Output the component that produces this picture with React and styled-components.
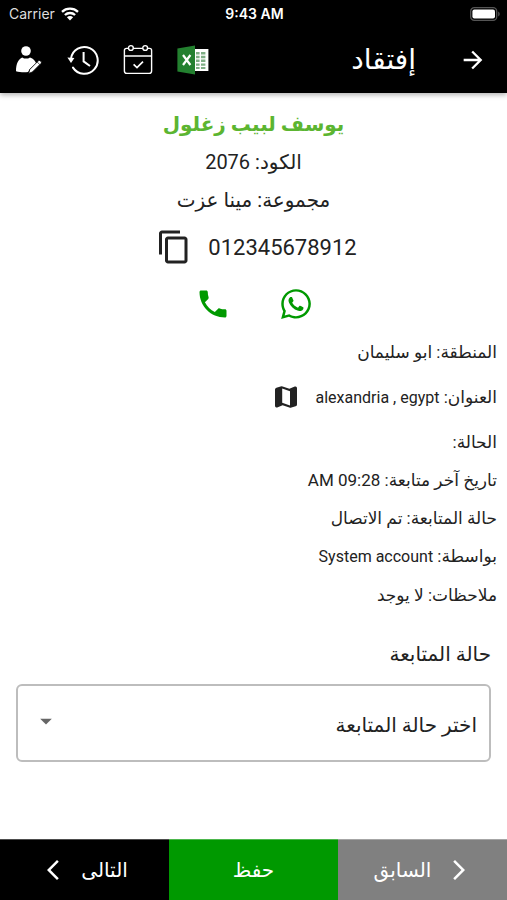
import React, { useState } from 'react';
import styled, { createGlobalStyle } from 'styled-components';
import {
    MdArrowForward,
    MdArrowBackIosNew,
    MdArrowForwardIos,
    MdContentCopy,
    MdPhone,
    MdArrowDropDown,
} from 'react-icons/md';
import { FaWhatsapp } from 'react-icons/fa';

const details = [
    { label: 'الحالة', value: '' },
    { label: 'تاريخ آخر متابعة', value: '09:28 AM' },
    { label: 'حالة المتابعة', value: 'تم الاتصال' },
    { label: 'بواسطة', value: 'System account', latin: true },
    { label: 'ملاحظات', value: 'لا يوجد' },
];

export default function App() {
    const [status, setStatus] = useState('');

    return (
        <Page dir="rtl" lang="ar">
            <GlobalStyle />

            <Header>
                <StatusBar dir="ltr">
                    <Carrier>Carrier <WifiIcon /></Carrier>
                    <Time>9:43 AM</Time>
                    <BatteryArea><BatteryIcon /></BatteryArea>
                </StatusBar>

                <NavBar>
                    <IconButton aria-label="رجوع"><MdArrowForward size={28} /></IconButton>
                    <Title>إفتقاد</Title>
                    <Tools dir="ltr">
                        <IconButton aria-label="تعديل"><UserEditIcon /></IconButton>
                        <IconButton aria-label="السجل"><HistoryIcon /></IconButton>
                        <IconButton aria-label="الحضور"><CalendarIcon /></IconButton>
                        <IconButton aria-label="Excel"><ExcelIcon /></IconButton>
                    </Tools>
                </NavBar>
            </Header>

            <Content>
                <Person>
                    <Name>يوسف لبيب زغلول</Name>
                    <Line>الكود: 2076</Line>
                    <Line>مجموعة: مينا عزت</Line>
                    <PhoneRow>
                        <Phone>012345678912</Phone>
                        <IconButton aria-label="نسخ"><MdContentCopy size={36} /></IconButton>
                    </PhoneRow>
                    <Contact>
                        <ContactLink href="#whatsapp" aria-label="واتساب"><FaWhatsapp size={34} /></ContactLink>
                        <ContactLink href="#call" aria-label="اتصال"><MdPhone size={36} /></ContactLink>
                    </Contact>
                </Person>

                <Details>
                    <Detail>المنطقة: ابو سليمان</Detail>
                    <AddressRow>
                        <span>العنوان: <Latin>alexandria , egypt</Latin></span>
                        <IconButton aria-label="الخريطة"><MapIcon /></IconButton>
                    </AddressRow>
                    {details.map((item) => (
                        <Detail key={item.label}>
                            {item.label}: {item.latin ? <Latin>{item.value}</Latin> : item.value}
                        </Detail>
                    ))}
                </Details>

                <Field>
                    <Label htmlFor="status">حالة المتابعة</Label>
                    <SelectBox>
                        <Select id="status" value={status} onChange={(e) => setStatus(e.target.value)}>
                            <option value="">اختر حالة المتابعة</option>
                            <option value="called">تم الاتصال</option>
                        </Select>
                        <Caret><MdArrowDropDown size={28} /></Caret>
                    </SelectBox>
                </Field>
            </Content>

            <Footer>
                <FooterButton $color="#808080"><MdArrowForwardIos size={24} />السابق</FooterButton>
                <FooterButton $color="#009900">حفظ</FooterButton>
                <FooterButton $color="#000">التالى<MdArrowBackIosNew size={24} /></FooterButton>
            </Footer>
        </Page>
    );
}

function WifiIcon() {
    return (
        <svg width="18" height="14" viewBox="0 0 18 14" fill="none" stroke="#fff" strokeWidth="2.3">
            <path d="M1 4.8 C5.5 0.6 12.5 0.6 17 4.8" />
            <path d="M3.9 8 C6.8 5.3 11.2 5.3 14.1 8" />
            <path d="M9 13.4 L5.9 10.3 C7.7 8.7 10.3 8.7 12.1 10.3 Z" fill="#fff" stroke="none" />
        </svg>
    );
}

function BatteryIcon() {
    return (
        <svg width="30" height="14" viewBox="0 0 30 14">
            <rect x="0.7" y="0.7" width="26" height="12.6" rx="3.6" fill="none" stroke="#555" strokeWidth="1.3" />
            <rect x="2.4" y="2.4" width="22.6" height="9.2" rx="2" fill="#fff" />
            <path d="M28.2 4.6 C30.2 5.4 30.2 8.6 28.2 9.4 Z" fill="#555" />
        </svg>
    );
}

function UserEditIcon() {
    return (
        <svg width="28" height="30" viewBox="0 0 28 30" fill="#fff">
            <circle cx="11" cy="6" r="4.8" />
            <path d="M1 26.2 C1 18.4 3.6 13.8 7.2 12.4 C9.6 14 12.6 14 15 12.4 C18.4 13.6 20.4 16 21.2 18.4 L14.4 24.6 L13.2 27 C9 27.6 4.6 27.2 1 26.2 Z" />
            <path d="M14.8 24.4 L23.4 15.8 Q24.4 15 25.4 16 L26 16.6 Q26.8 17.6 26 18.4 L17.4 27 L13.6 28.4 Z" stroke="#000" strokeWidth="0.8" />
            <path d="M22 16.8 L25 19.8" stroke="#000" strokeWidth="0.7" />
        </svg>
    );
}

function HistoryIcon() {
    return (
        <svg width="32" height="32" viewBox="0 0 32 32" fill="none" stroke="#fff" strokeWidth="2">
            <path d="M4 14.6 A13.4 13.4 0 1 1 6 23.6" strokeLinecap="round" />
            <path d="M0.4 13.4 L7.4 14 L4 19 Z" fill="#fff" stroke="none" />
            <path d="M16.6 8 V17.4 L23 22" />
        </svg>
    );
}

function CalendarIcon() {
    return (
        <svg width="30" height="32" viewBox="0 0 30 32" fill="none" stroke="#fff" strokeWidth="1.4">
            <path d="M5.6 4.4 H3.4 Q1.4 4.4 1.4 6.4 V27 Q1.4 29.4 3.8 29.4 H26.2 Q28.6 29.4 28.6 27 V6.4 Q28.6 4.4 26.6 4.4 H24.6" />
            <path d="M10.2 4.4 H19.8 M1.4 12 H28.6" />
            <circle cx="7.9" cy="4" r="2.4" />
            <circle cx="22.2" cy="4" r="2.4" />
            <path d="M10.6 20.4 L14 23.6 L20 17.6" strokeWidth="1.7" />
        </svg>
    );
}

function ExcelIcon() {
    return (
        <svg width="32" height="30" viewBox="0 0 32 30">
            <rect x="15" y="4" width="16.4" height="22" fill="#fff" />
            <path d="M0.4 3.6 L18 0.6 V29.4 L0.4 26.4 Z" fill="#23802f" />
            <path d="M6 10 L13.4 20 M13.4 10 L6 20" stroke="#fff" strokeWidth="2.2" />
            <g fill="#7fae85">
                <path d="M19 7 h3.6 v2.4 h-3.6z M19 10.8 h3.6 v2.4 h-3.6z M19 14.6 h3.6 v2.4 h-3.6z M19 18.4 h3.6 v2.4 h-3.6z M19 22 h3.6 v2 h-3.6z" />
                <path d="M24 7 h4.4 v2.4 h-4.4z M24 10.8 h4.4 v2.4 h-4.4z M24 14.6 h4.4 v2.4 h-4.4z M24 18.4 h4.4 v2.4 h-4.4z M24 22 h4.4 v2 h-4.4z" />
            </g>
        </svg>
    );
}

function MapIcon() {
    return (
        <svg width="24" height="24" viewBox="0 0 24 24">
            <path d="M1 4.6 Q1 3.2 2.4 2.8 L6.6 1.4 Q7.6 1 8.6 1.4 L15.4 3.8 L20.8 1.6 Q23 1 23 3.2 V19.4 Q23 20.8 21.6 21.2 L17.4 22.6 Q16.4 23 15.4 22.6 L8.6 20.2 L3.2 22.4 Q1 23 1 20.8 Z" fill="#222" />
            <path d="M8.2 3.6 L16 6.2 V20.4 L8.2 17.8 Z" fill="#fff" />
        </svg>
    );
}

const GlobalStyle = createGlobalStyle`
    * {
        box-sizing: border-box;
    }

    body {
        margin: 0;
        background-color: #fff;
    }

    button, select {
        font: inherit;
        color: inherit;
    }
`;

const Page = styled.div`
    display: flex;
    flex-direction: column;
    min-height: 100vh;
    color: #222;
    font-family: Roboto, "DejaVu Sans", sans-serif;
`;

const Header = styled.header`
    background-color: #000;
    color: #fff;
    box-shadow: 0 2px 5px rgba(0, 0, 0, 0.3);
`;

const StatusBar = styled.div`
    display: grid;
    grid-template-columns: 1fr auto 1fr;
    align-items: center;
    height: 27px;
    padding: 0 7px 0 9px;
    font-family: Inter, sans-serif;
    font-size: 14px;
`;

const Carrier = styled.div`
    display: flex;
    align-items: center;
    gap: 6px;
    color: #ddd;
`;

const Time = styled.div`
    font-weight: 600;
`;

const BatteryArea = styled.div`
    display: flex;
    justify-content: flex-end;
`;

const NavBar = styled.nav`
    display: flex;
    align-items: center;
    height: 66px;
    padding: 0 20px 0 15px;
`;

const Title = styled.h1`
    flex: 1;
    margin: 0 43px 0 0;
    font-size: 28px;
    line-height: 32px;
    font-weight: 400;
`;

const Tools = styled.div`
    display: flex;
    align-items: center;
    gap: 24px;
`;

const IconButton = styled.button`
    display: flex;
    align-items: center;
    justify-content: center;
    padding: 0;
    border: 0;
    background: none;
    cursor: pointer;
`;

const Content = styled.main`
    flex: 1;
    padding: 12px 10px;
`;

const Person = styled.section`
    display: flex;
    flex-direction: column;
    align-items: center;
`;

const Name = styled.h2`
    margin: 0;
    font-size: 20px;
    line-height: 38px;
    font-weight: 700;
    color: #5cb531;
`;

const Line = styled.p`
    margin: 0;
    font-size: 20px;
    line-height: 38px;
`;

const PhoneRow = styled.div`
    display: flex;
    align-items: center;
    gap: 16px;
    height: 56px;
    padding-left: 6px;
`;

const Phone = styled.span`
    font-size: 22px;
`;

const Contact = styled.div`
    display: flex;
    align-items: center;
    gap: 48px;
    height: 58px;
`;

const ContactLink = styled.a`
    display: flex;
    color: #009900;
`;

const Details = styled.section`
    font-size: 17px;
    line-height: 38px;
`;

const Detail = styled.p`
    margin: 0;
`;

const Latin = styled.bdi`
    font-size: 16px;
`;

const AddressRow = styled.div`
    display: flex;
    align-items: center;
    gap: 18px;
    height: 52px;
`;

const Field = styled.div`
    padding: 18px 6px 0;
`;

const Label = styled.label`
    display: block;
    font-size: 20px;
    line-height: 44px;
`;

const SelectBox = styled.div`
    position: relative;
    margin-top: 8px;
`;

const Select = styled.select`
    width: 100%;
    height: 78px;
    padding: 4px 12px 0;
    border: 2px solid #bdbdbd;
    border-radius: 6px;
    background-color: #fff;
    font-size: 20px;
    appearance: none;
`;

const Caret = styled.span`
    position: absolute;
    top: 0;
    bottom: 4px;
    left: 16px;
    display: flex;
    align-items: center;
    color: #666;
    pointer-events: none;
`;

const Footer = styled.footer`
    display: grid;
    grid-template-columns: repeat(3, 1fr);
    height: 61px;
`;

const FooterButton = styled.button`
    display: flex;
    align-items: center;
    justify-content: center;
    gap: 16px;
    border: 0;
    border-top: 1px solid rgba(255, 255, 255, 0.3);
    background-color: ${(props) => props.$color};
    color: #fff;
    font-size: 20px;
    cursor: pointer;
`;
